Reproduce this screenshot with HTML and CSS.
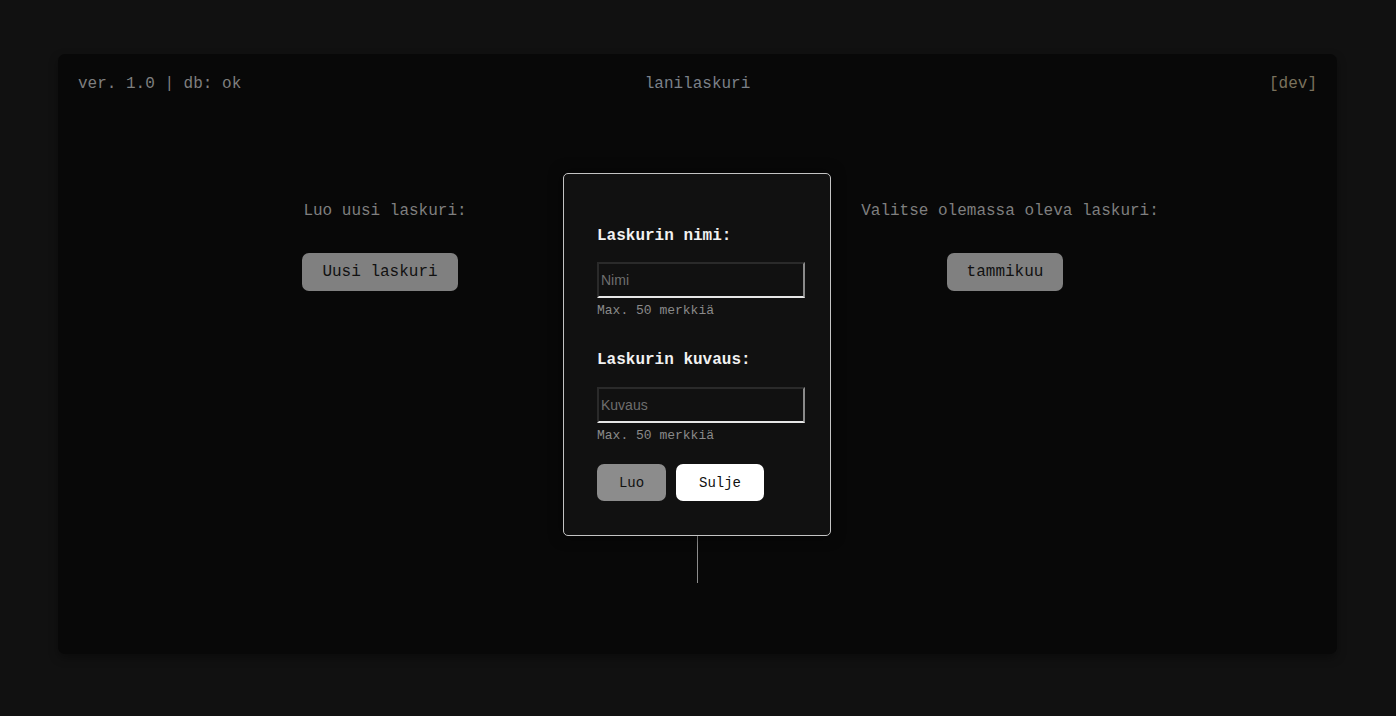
FILE: index.html
```html
<!DOCTYPE html>
<html lang="fi">
<head>
<meta charset="utf-8">
<title>lanilaskuri</title>
<link rel="stylesheet" href="styles.css">
</head>
<body>
<div class="panel">
  <header class="topbar">
    <span class="status">ver. 1.0 | db: ok</span>
    <span class="title">lanilaskuri</span>
    <span class="env">[dev]</span>
  </header>
  <main class="columns">
    <section class="col">
      <p class="col-label">Luo uusi laskuri:</p>
      <button class="btn btn-grey">Uusi laskuri</button>
    </section>
    <div class="divider"></div>
    <section class="col">
      <p class="col-label">Valitse olemassa oleva laskuri:</p>
      <button class="btn btn-grey">tammikuu</button>
    </section>
  </main>
  <div class="modal">
    <label class="field-label">Laskurin nimi:</label>
    <input class="field" type="text" placeholder="Nimi">
    <span class="hint">Max. 50 merkkiä</span>
    <label class="field-label second">Laskurin kuvaus:</label>
    <input class="field field-second" type="text" placeholder="Kuvaus">
    <span class="hint">Max. 50 merkkiä</span>
    <div class="actions">
      <button class="btn btn-small btn-mid">Luo</button>
      <button class="btn btn-small btn-white">Sulje</button>
    </div>
  </div>
</div>
</body>
</html>
```

FILE: styles.css
```css
* { box-sizing: border-box; }
html, body { margin: 0; padding: 0; }
body {
  background: #111111;
  font-family: "Liberation Mono", "Courier New", monospace;
  width: 1396px;
  height: 716px;
  overflow: hidden;
  padding: 54px 59px 0 58px;
}
.panel {
  position: relative;
  width: 1279px;
  height: 600px;
  background: #080808;
  border-radius: 7px;
  box-shadow: 0 4px 10px rgba(0,0,0,0.35);
}
.topbar {
  display: grid;
  grid-template-columns: 1fr auto 1fr;
  align-items: center;
  padding: 21px 20px 0 20px;
  font-size: 16px;
  line-height: 18px;
  color: #7f7f7f;
}
.status { justify-self: start; }
.title { justify-self: center; color: #7b8088; }
.env { justify-self: end; color: #7a715c; }
.columns {
  display: flex;
  align-items: stretch;
  padding: 0 15px;
  margin-top: 100px;
  height: 390px;
}
.col {
  flex: 1;
  display: flex;
  flex-direction: column;
  align-items: center;
}
.col-label {
  margin: 9px 0 0 0;
  font-size: 16px;
  line-height: 18px;
  color: #7f7f7f;
}
.divider {
  width: 1px;
  background: #8c8c8c;
}
.btn {
  font-family: "Liberation Mono", "Courier New", monospace;
  border: none;
  border-radius: 7px;
  color: #111;
  cursor: pointer;
}
.btn-grey {
  background: #808080;
  font-size: 16px;
  height: 38px;
  padding: 0 20px;
  margin: 33px 10px 0 0;
}
.modal {
  position: absolute;
  left: 505px;
  top: 119px;
  width: 268px;
  height: 363px;
  background: #111111;
  border: 1px solid #c4c4c4;
  border-radius: 5px;
  box-shadow: 0 0 14px rgba(0,0,0,0.6);
  padding: 53px 25px 0 33px;
  display: flex;
  flex-direction: column;
  align-items: flex-start;
}
.field-label {
  font-size: 16px;
  line-height: 18px;
  font-weight: bold;
  color: #f2f2f2;
}
.field-label.second { margin-top: 33px; }
.field {
  margin-top: 17px;
  width: 208px;
  height: 36px;
  background: #111111;
  border-top: 2px solid #2a2a2a;
  border-left: 2px solid #2a2a2a;
  border-right: 2px solid #8a8a8a;
  border-bottom: 2px solid #e6e6e6;
  padding: 0 2px;
  font-family: "Liberation Sans", Arial, sans-serif;
  font-size: 14px;
  color: #ddd;
  outline: none;
}
.field.field-second { margin-top: 18px; }
.field::placeholder { color: #6e6e6e; }
.hint {
  margin-top: 5px;
  font-size: 13px;
  line-height: 15px;
  color: #8a8a8a;
}
.actions {
  display: flex;
  margin-top: 21px;
}
.btn-small {
  font-size: 14px;
  height: 37px;
  margin-right: 10px;
}
.btn-mid { background: #8c8c8c; width: 69px; }
.btn-white { background: #ffffff; width: 88px; }
```
